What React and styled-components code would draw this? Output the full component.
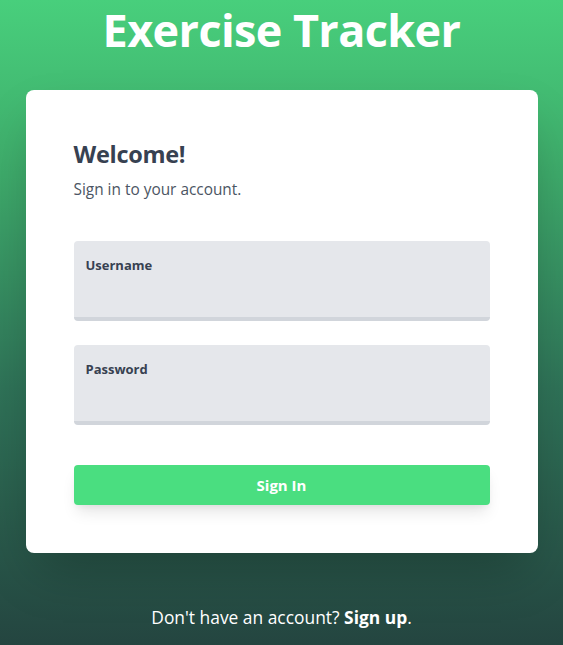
import React from "react";
import styled, { createGlobalStyle } from "styled-components";

const Global = createGlobalStyle`
  html, body { margin: 0; padding: 0; }
  body {
    font-family: "Open Sans", "Noto Sans", sans-serif;
  }
  * { box-sizing: border-box; }
`;

const Page = styled.div`
  min-height: 645px;
  background: linear-gradient(180deg, #48cf7c 0%, #3fae6c 25%, #2f7358 60%, #244540 100%);
  display: flex;
  flex-direction: column;
  align-items: center;
  padding: 0 25px;
`;

const Title = styled.h1`
  margin: 0;
  padding-top: 4px;
  font-size: 45px;
  line-height: 52px;
  font-weight: 700;
  color: #ffffff;
  letter-spacing: -0.6px;
  text-align: center;
`;

const Card = styled.main`
  margin-top: 34px;
  width: 512px;
  background: #ffffff;
  border-radius: 8px;
  padding: 48px;
  box-shadow: 0 25px 50px -12px rgba(0, 0, 0, 0.25);
`;

const Heading = styled.h3`
  margin: 0;
  font-size: 23.5px;
  line-height: 32px;
  font-weight: 700;
  color: #374151;
  letter-spacing: -0.3px;
`;

const Sub = styled.p`
  margin: 8px 0 0;
  font-size: 15.4px;
  line-height: 24px;
  color: #4b5563;
`;

const Form = styled.form`
  margin-top: 39px;
  display: flex;
  flex-direction: column;
`;

const Field = styled.div`
  height: 80px;
  background: #e5e7eb;
  border-radius: 4px;
  border-bottom: 4px solid #d1d5db;
  padding: 14px 12px 0;
  margin-bottom: 24px;
`;

const Label = styled.label`
  display: block;
  font-size: 13px;
  line-height: 20px;
  font-weight: 700;
  color: #374151;
`;

const Button = styled.button`
  margin-top: 16px;
  height: 40px;
  border: none;
  border-radius: 4px;
  background: #4ade80;
  color: #ffffff;
  font-family: inherit;
  font-size: 15px;
  font-weight: 700;
  box-shadow: 0 10px 15px -3px rgba(0, 0, 0, 0.1), 0 4px 6px -2px rgba(0, 0, 0, 0.05);
`;

const Footer = styled.p`
  margin: 50px 0 0;
  font-size: 17.4px;
  line-height: 28px;
  color: #ffffff;
  text-align: center;
`;

const Strong = styled.a`
  font-weight: 700;
  color: #ffffff;
  text-decoration: none;
`;

export default function App() {
  return (
    <>
      <Global />
      <Page>
        <Title>Exercise Tracker</Title>
        <Card>
          <Heading>Welcome!</Heading>
          <Sub>Sign in to your account.</Sub>
          <Form onSubmit={(e) => e.preventDefault()}>
            <Field>
              <Label>Username</Label>
            </Field>
            <Field>
              <Label>Password</Label>
            </Field>
            <Button type="submit">Sign In</Button>
          </Form>
        </Card>
        <Footer>
          Don't have an account? <Strong href="#">Sign up</Strong>.
        </Footer>
      </Page>
    </>
  );
}
